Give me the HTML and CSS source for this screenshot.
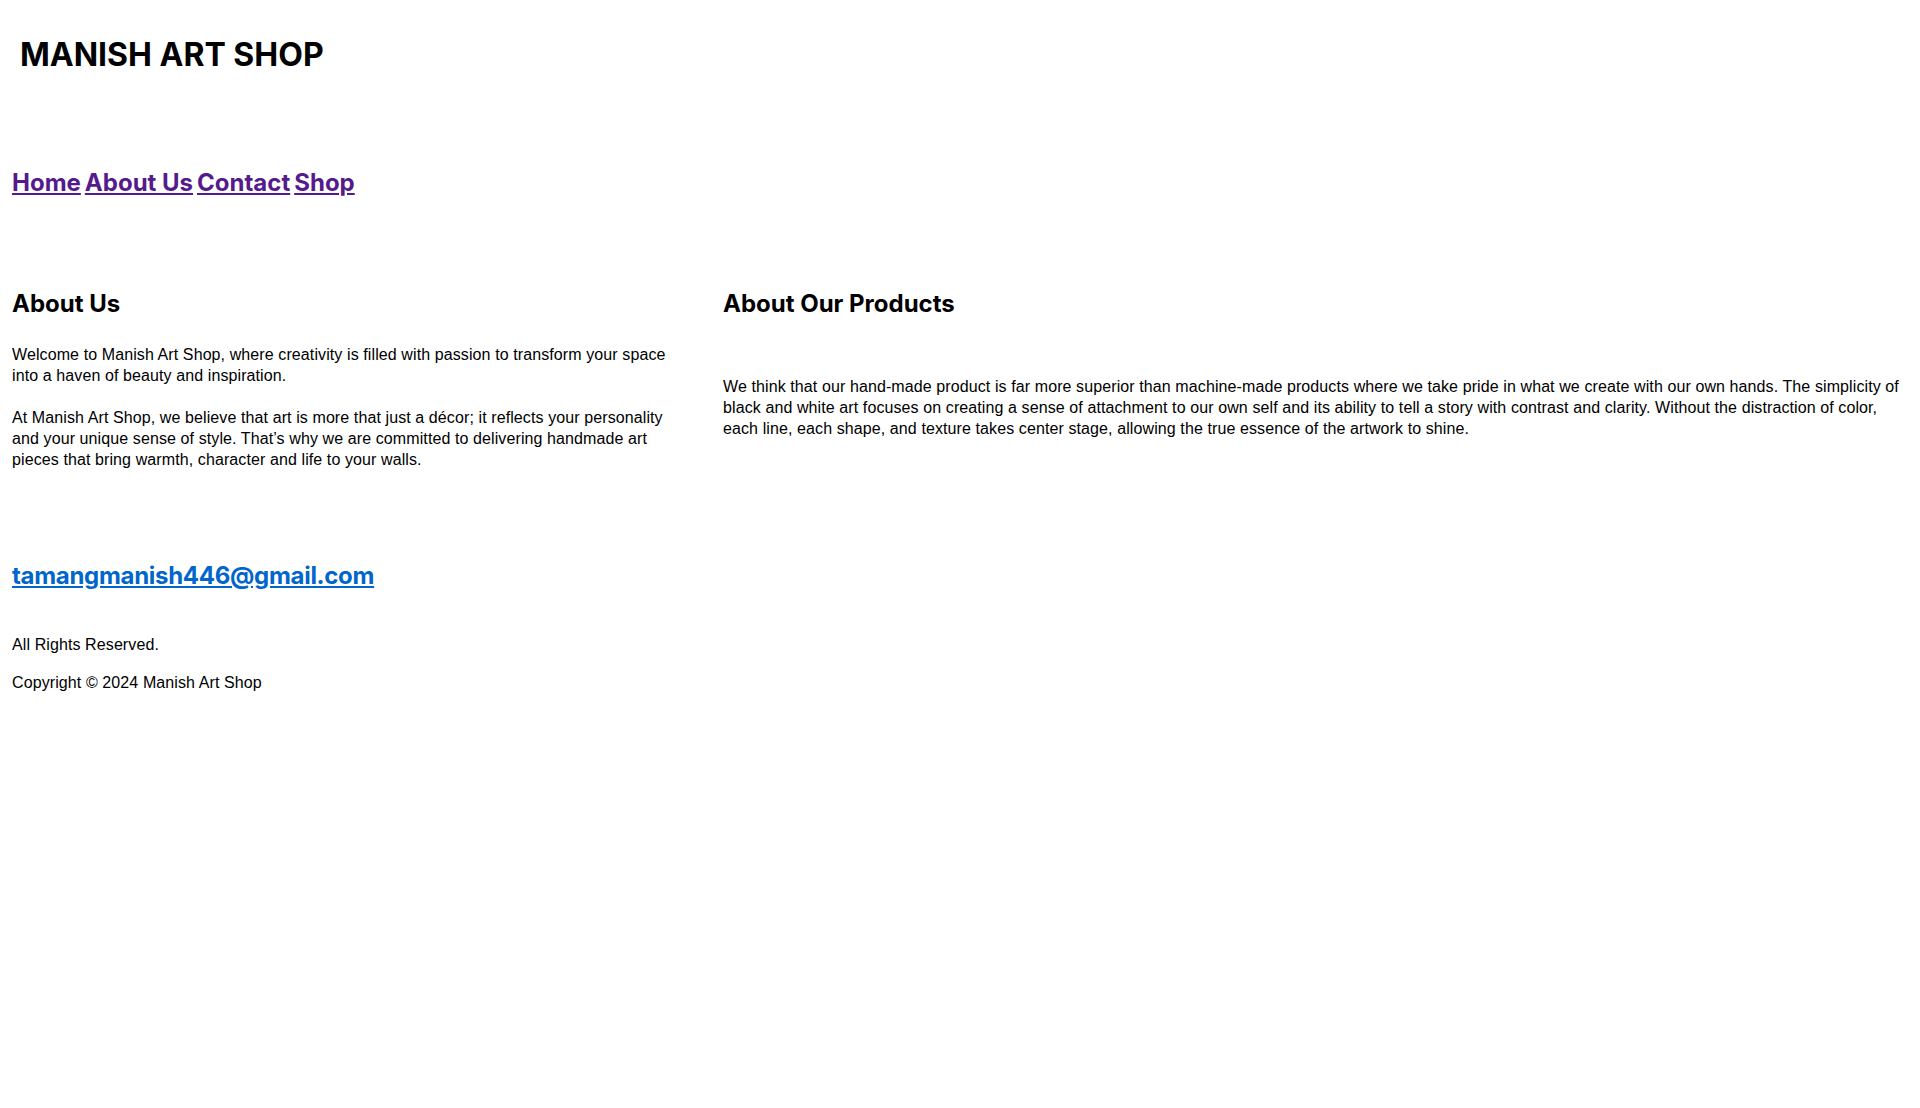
FILE: index.html
```html
<!DOCTYPE html>
<html lang="en">
<head>
<meta charset="utf-8">
<title>Manish Art Shop</title>
<link rel="stylesheet" href="styles.css">
</head>
<body>
<header class="site-header">
  <h1 class="brand">MANISH ART SHOP</h1>
</header>
<nav class="main-nav">
  <a href="#" class="nav-link">Home</a>
  <a href="#" class="nav-link">About Us</a>
  <a href="#" class="nav-link">Contact</a>
  <a href="#" class="nav-link">Shop</a>
</nav>
<main class="content">
  <section class="about">
    <h2 class="section-title">About Us</h2>
    <p class="text">Welcome to Manish Art Shop, where creativity is filled with passion to transform your space into a haven of beauty and inspiration.</p>
    <p class="text">At Manish Art Shop, we believe that art is more that just a décor; it reflects your personality and your unique sense of style. That’s why we are committed to delivering handmade art pieces that bring warmth, character and life to your walls.</p>
  </section>
  <section class="products">
    <h2 class="section-title">About Our Products</h2>
    <p class="text products-text">We think that our hand-made product is far more superior than machine-made products where we take pride in what we create with our own hands. The simplicity of black and white art focuses on creating a sense of attachment to our own self and its ability to tell a story with contrast and clarity. Without the distraction of color, each line, each shape, and texture takes center stage, allowing the true essence of the artwork to shine.</p>
  </section>
</main>
<footer class="site-footer">
  <a href="#" class="email">tamangmanish446@gmail.com</a>
  <p class="small">All Rights Reserved.</p>
  <p class="small">Copyright © 2024 Manish Art Shop</p>
</footer>
</body>
</html>
```
FILE: styles.css
```css
html, body {
  background: #ffffff;
}
body {
  margin: 0;
  padding: 0 12px;
  font-family: "Liberation Sans", Arial, sans-serif;
  font-size: 16px;
  line-height: 21px;
  letter-spacing: 0.1px;
  color: #000;
}
.site-header {
  padding: 35px 8px 0;
  font-family: Inter, "Liberation Sans", sans-serif;
  letter-spacing: 0;
}
.brand {
  margin: 0;
  font-size: 32px;
  line-height: 39px;
  font-weight: 700;
}
.main-nav {
  display: flex;
  gap: 4px;
  margin-top: 94px;
  font-family: Inter, "Liberation Sans", sans-serif;
  letter-spacing: 0;
}
.nav-link {
  font-size: 24px;
  line-height: 29px;
  font-weight: 700;
  color: #551a8b;
  text-decoration: underline;
}
.content {
  display: grid;
  grid-template-columns: 3fr 5fr;
  margin-top: 92px;
}
.about {
  padding-right: 40px;
}
.section-title {
  margin: 0 0 26px;
  font-family: Inter, "Liberation Sans", sans-serif;
  font-size: 24px;
  line-height: 29px;
  font-weight: 700;
  letter-spacing: 0;
}
.text {
  margin: 0 0 21px;
}
.products-text {
  margin-top: 58px;
}
.site-footer {
  margin-top: 70px;
}
.email {
  display: inline-block;
  font-family: Inter, "Liberation Sans", sans-serif;
  font-size: 24px;
  line-height: 29px;
  font-weight: 700;
  letter-spacing: -0.3px;
  color: #0066cc;
}
.small {
  margin: 44px 0 0;
}
.small + .small {
  margin-top: 17px;
}
```
